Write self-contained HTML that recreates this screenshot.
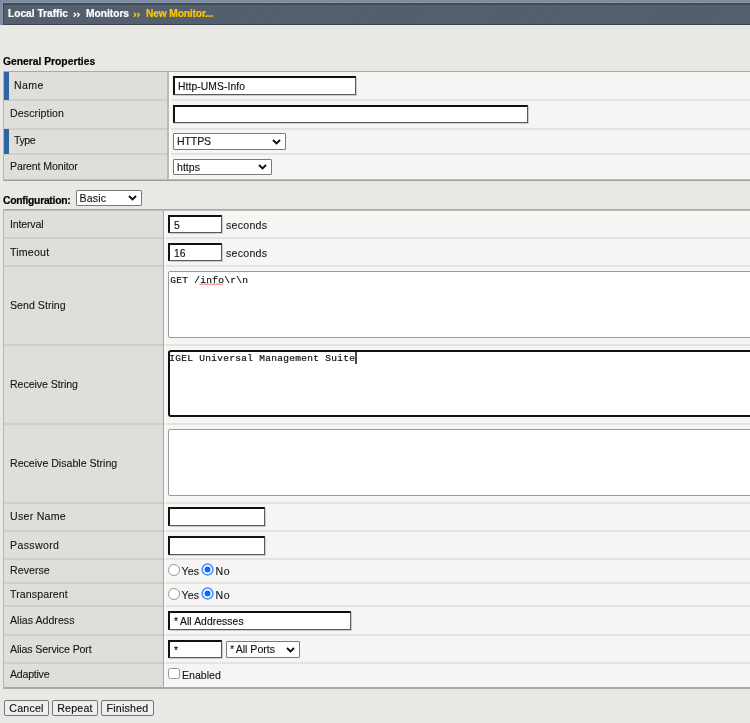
<!DOCTYPE html>
<html><head><meta charset="utf-8">
<style>
*{box-sizing:border-box}
html,body{margin:0;padding:0;width:750px;height:723px;overflow:hidden;background:#e9e8e4;font-family:"Liberation Sans",sans-serif;font-size:10.6px;color:#222}
.a{position:absolute}
#hdr{position:absolute;left:0;top:0;width:750px;height:25px;background:#7c8da1}
#bar{position:absolute;left:3px;top:3px;width:747px;height:22px;background:#525e6c;box-shadow:-1px -1px 0 #8798ac;border-top:2px solid #434a53;border-left:1px solid #3d434a;border-bottom:1px solid #3f454c;
 background-image:repeating-linear-gradient(135deg,rgba(255,255,255,0.018) 0 1.5px,rgba(0,0,0,0.012) 1.5px 3px)}
.ht{position:absolute;will-change:transform;top:0;font-weight:bold;font-size:10.2px;-webkit-text-stroke:0.2px currentColor;line-height:1;white-space:nowrap;color:#fff}
.sec{position:absolute;font-weight:bold;font-size:10.3px;color:#000;-webkit-text-stroke:0.2px #000;white-space:nowrap;line-height:1}
.tbl{position:absolute;left:3px;width:747px;border-top:1px solid #a9a9a9;border-left:1px solid #b5b5b5;border-bottom:2px solid #a9a9a9;background:#f6f5f3}
.lab{position:absolute;left:0;top:0;bottom:0;background:#dfdeda}
.vl{position:absolute;top:0;bottom:0;z-index:2;box-shadow:2px 0 0 #fcfcfb}
.sep{position:absolute;left:0;right:0;height:2px;background:linear-gradient(to right,#cfcecb 0 var(--w),#e3e3e1 var(--w))}
.t1 .sep{--w:163px}
.t2 .sep{--w:159px}
.blue{position:absolute;left:0;width:5px;background:#2e64a2;z-index:1}
.lt{position:absolute;white-space:nowrap;line-height:1;color:#151515;-webkit-text-stroke:0.1px #151515}
.inp{position:absolute;background:#fff;border-style:solid;border-width:2px 1px 1px 2px;border-color:#111 #5a5a5a #5a5a5a #111;box-shadow:1px 1px 0 rgba(110,110,110,0.3)}
.it{position:absolute;top:0;left:0;white-space:nowrap;line-height:1;font-size:10.3px;color:#111;-webkit-text-stroke:0.15px #111;letter-spacing:0.1px}
.sel{position:absolute;background:#fff;border:1px solid #7a7a7a;border-radius:1px;font-size:10.6px;color:#111;-webkit-text-stroke:0.12px #111;line-height:14px;padding-left:3px;white-space:nowrap}
.chev{position:absolute;top:50%;right:4px;margin-top:-3px;width:9px;height:6px;overflow:visible}
.ta{position:absolute;background:#fff;border:1px solid #9a9a9a;border-radius:2px;font-family:"Liberation Mono",monospace;font-size:9.5px;letter-spacing:0.3px;color:#111;-webkit-text-stroke:0.2px #111;white-space:pre;line-height:12px;padding:3px 0 0 1.15px}
.btn{position:absolute;top:700px;height:16px;background:#efefef;border:1px solid #767676;border-radius:2px;font-size:10.6px;color:#111;-webkit-text-stroke:0.15px #111;letter-spacing:0.22px;line-height:14px;text-align:center;padding-left:0.5px}
.rad{position:absolute;width:12px;height:12px;border-radius:50%;border:1px solid #9b9b9b;background:#fff}
.radc{position:absolute;width:12px;height:12px;border-radius:50%;border:1.6px solid #3d8cf8;background:#fff;margin-left:0.5px}
.radc:after{content:"";position:absolute;left:1.4px;top:1.4px;width:6px;height:6px;border-radius:50%;background:#0b6cf5}
</style></head><body>
<div id="root" style="position:absolute;left:0;top:0;width:750px;height:723px;will-change:transform">
<div id="hdr"><div id="bar"></div>
 <span class="ht" style="left:8px;top:9px">Local Traffic</span>
 <svg class="a" style="left:73px;top:12px" width="8" height="6" viewBox="0 0 8 6"><path d="M0.8 0.8L2.8 2.8L0.8 4.8M4.3 0.8L6.3 2.8L4.3 4.8" fill="none" stroke="#fff" stroke-width="1.3"/></svg>
 <span class="ht" style="left:85.5px;top:9px">Monitors</span>
 <svg class="a" style="left:133px;top:12px" width="8" height="6" viewBox="0 0 8 6"><path d="M0.8 0.8L2.8 2.8L0.8 4.8M4.3 0.8L6.3 2.8L4.3 4.8" fill="none" stroke="#fcc800" stroke-width="1.3"/></svg>
 <span class="ht" style="left:146px;top:9px;color:#fcc800;letter-spacing:-0.12px">New Monitor...</span>
</div>

<div class="sec" style="left:3px;top:57px">General Properties</div>

<!-- table 1 -->
<div class="tbl t1" style="top:71px;height:110px;border-bottom:1px solid #9e9e9e">
 <div style="position:absolute;left:0;right:0;bottom:0;height:1px;background:#bdbdbb;z-index:3"></div>
 <div class="lab" style="width:163px"></div><div class="vl" style="left:163px;width:2px;background:#b9b9b7"></div>
 <div class="blue" style="top:0;height:28px"></div>
 <div class="sep" style="top:27px"></div>
 <div class="sep" style="top:56px"></div>
 <div class="blue" style="top:57px;height:25px"></div>
 <div class="sep" style="top:81px"></div>
 <span class="lt" style="left:10px;top:8px;letter-spacing:0.35px">Name</span>
 <span class="lt" style="left:6px;top:36px;letter-spacing:0.1px">Description</span>
 <span class="lt" style="left:10px;top:63px;letter-spacing:-0.45px">Type</span>
 <span class="lt" style="left:6px;top:89px;letter-spacing:-0.13px">Parent Monitor</span>
</div>
<div class="inp" style="left:173px;top:76px;width:183px;height:19px"></div><span class="it" style="left:178px;top:82px">Http-UMS-Info</span>
<div class="inp" style="left:173px;top:105px;width:355px;height:18px"></div>
<div class="sel" style="left:173px;top:133px;width:113px;height:17px;letter-spacing:-0.15px">HTTPS<svg class="chev" viewBox="0 0 9 6"><path d="M1 1L4.5 4.5L8 1" fill="none" stroke="#111" stroke-width="1.9"/></svg></div>
<div class="sel" style="left:173px;top:159px;width:99px;height:16px;line-height:14px">https<svg class="chev" viewBox="0 0 9 6"><path d="M1 1L4.5 4.5L8 1" fill="none" stroke="#111" stroke-width="1.9"/></svg></div>

<div class="sec" style="left:3px;top:196px;letter-spacing:-0.25px">Configuration:</div>
<div class="sel" style="left:75.5px;top:190px;width:66.5px;height:16px;line-height:14px;letter-spacing:0.15px">Basic<svg class="chev" viewBox="0 0 9 6"><path d="M1 1L4.5 4.5L8 1" fill="none" stroke="#111" stroke-width="1.9"/></svg></div>

<!-- table 2 -->
<div class="tbl t2" style="top:209px;height:480px">
 <div style="position:absolute;left:0;right:0;top:0;height:1px;background:#bdbdbb;z-index:3"></div>
 <div class="lab" style="width:159px"></div><div class="vl" style="left:159px;width:1px;background:#a9a9a8"></div>
 <div class="sep" style="top:27px"></div>
 <div class="sep" style="top:55px"></div>
 <div class="sep" style="top:134px"></div>
 <div class="sep" style="top:213px"></div>
 <div class="sep" style="top:292px"></div>
 <div class="sep" style="top:320px"></div>
 <div class="sep" style="top:348px"></div>
 <div class="sep" style="top:372px"></div>
 <div class="sep" style="top:395px"></div>
 <div class="sep" style="top:424px"></div>
 <div class="sep" style="top:452px"></div>
 <span class="lt" style="left:6px;top:9px;letter-spacing:-0.18px">Interval</span>
 <span class="lt" style="left:6px;top:37px;letter-spacing:0.2px">Timeout</span>
 <span class="lt" style="left:6px;top:90px;letter-spacing:0.03px">Send String</span>
 <span class="lt" style="left:6px;top:169px;letter-spacing:-0.07px">Receive String</span>
 <span class="lt" style="left:6px;top:248px;letter-spacing:0px">Receive Disable String</span>
 <span class="lt" style="left:6px;top:301px;letter-spacing:0.27px">User Name</span>
 <span class="lt" style="left:6px;top:330px;letter-spacing:0.35px">Password</span>
 <span class="lt" style="left:6px;top:355px;letter-spacing:0.05px">Reverse</span>
 <span class="lt" style="left:6px;top:379px;letter-spacing:0.1px">Transparent</span>
 <span class="lt" style="left:6px;top:405px;letter-spacing:0.02px">Alias Address</span>
 <span class="lt" style="left:6px;top:434px;letter-spacing:-0.11px">Alias Service Port</span>
 <span class="lt" style="left:6px;top:459px;letter-spacing:-0.24px">Adaptive</span>
</div>
<div class="inp" style="left:168px;top:215px;width:54px;height:18px"></div><span class="it" style="left:174px;top:221px">5</span>
<span class="lt" style="left:226px;top:220px;letter-spacing:0.25px">seconds</span>
<div class="inp" style="left:168px;top:243px;width:54px;height:18px"></div><span class="it" style="left:174px;top:249px">16</span>
<span class="lt" style="left:226px;top:248px;letter-spacing:0.25px">seconds</span>
<div class="ta" style="left:168px;top:271px;width:600px;height:67px">GET /info\r\n</div><svg class="a" style="left:199px;top:282px" width="25" height="4" viewBox="0 0 25 4"><path d="M0 1.5L1.5 3L3 1.5L4.5 3L6 1.5L7.5 3L9 1.5L10.5 3L12 1.5L13.5 3L15 1.5L16.5 3L18 1.5L19.5 3L21 1.5L22.5 3L24 1.5" fill="none" stroke="#f04848" stroke-width="0.9"/></svg>
<div class="ta" style="left:168px;top:350px;width:600px;height:67px;border:2px solid #111;border-radius:3px;padding:0"></div><span class="a" style="left:169.15px;top:353px;font-family:'Liberation Mono',monospace;font-size:9.5px;letter-spacing:0.3px;color:#111;-webkit-text-stroke:0.2px #111;white-space:pre;line-height:12px">IGEL Universal Management Suite</span><div class="a" style="left:355.4px;top:352px;width:1.5px;height:12px;background:#4a4a4a"></div>
<div class="ta" style="left:168px;top:429px;width:600px;height:67px"></div>
<div class="inp" style="left:168px;top:507px;width:97px;height:19px"></div>
<div class="inp" style="left:168px;top:536px;width:97px;height:19px"></div>
<div class="rad" style="left:168px;top:564px"></div>
<span class="lt" style="left:181.5px;top:566px;letter-spacing:0.15px">Yes</span>
<svg class="a" style="left:201.3px;top:563px" width="13" height="13" viewBox="0 0 13 13"><circle cx="6.5" cy="6.5" r="5.4" fill="#fff" stroke="#3d8cf8" stroke-width="1.5"/><circle cx="6.5" cy="6.5" r="3" fill="#0b6cf5"/></svg>
<span class="lt" style="left:215.5px;top:566px;letter-spacing:0.5px">No</span>
<div class="rad" style="left:168px;top:588px"></div>
<span class="lt" style="left:181.5px;top:590px;letter-spacing:0.15px">Yes</span>
<svg class="a" style="left:201.3px;top:587px" width="13" height="13" viewBox="0 0 13 13"><circle cx="6.5" cy="6.5" r="5.4" fill="#fff" stroke="#3d8cf8" stroke-width="1.5"/><circle cx="6.5" cy="6.5" r="3" fill="#0b6cf5"/></svg>
<span class="lt" style="left:215.5px;top:590px;letter-spacing:0.5px">No</span>
<div class="inp" style="left:168px;top:611px;width:183px;height:19px"></div><span class="it" style="left:174px;top:617px">*</span><span class="it" style="left:180px;top:617px">All Addresses</span>
<div class="inp" style="left:168px;top:640px;width:54px;height:18px"></div><span class="it" style="left:174px;top:646px">*</span>
<div class="sel" style="left:226px;top:641px;width:74px;height:17px;padding-left:3px">*<span style="margin-left:1.5px">All Ports</span><svg class="chev" viewBox="0 0 9 6"><path d="M1 1L4.5 4.5L8 1" fill="none" stroke="#111" stroke-width="1.9"/></svg></div>
<div class="a" style="left:168px;top:668px;width:12px;height:11px;border:1px solid #979797;border-radius:2.5px;background:#fff"></div>
<span class="lt" style="left:182px;top:670px">Enabled</span>

<div class="btn" style="left:3.5px;width:45.5px">Cancel</div>
<div class="btn" style="left:51.5px;width:46.5px">Repeat</div>
<div class="btn" style="left:100.5px;width:53.5px">Finished</div>
</div>
</body></html>
